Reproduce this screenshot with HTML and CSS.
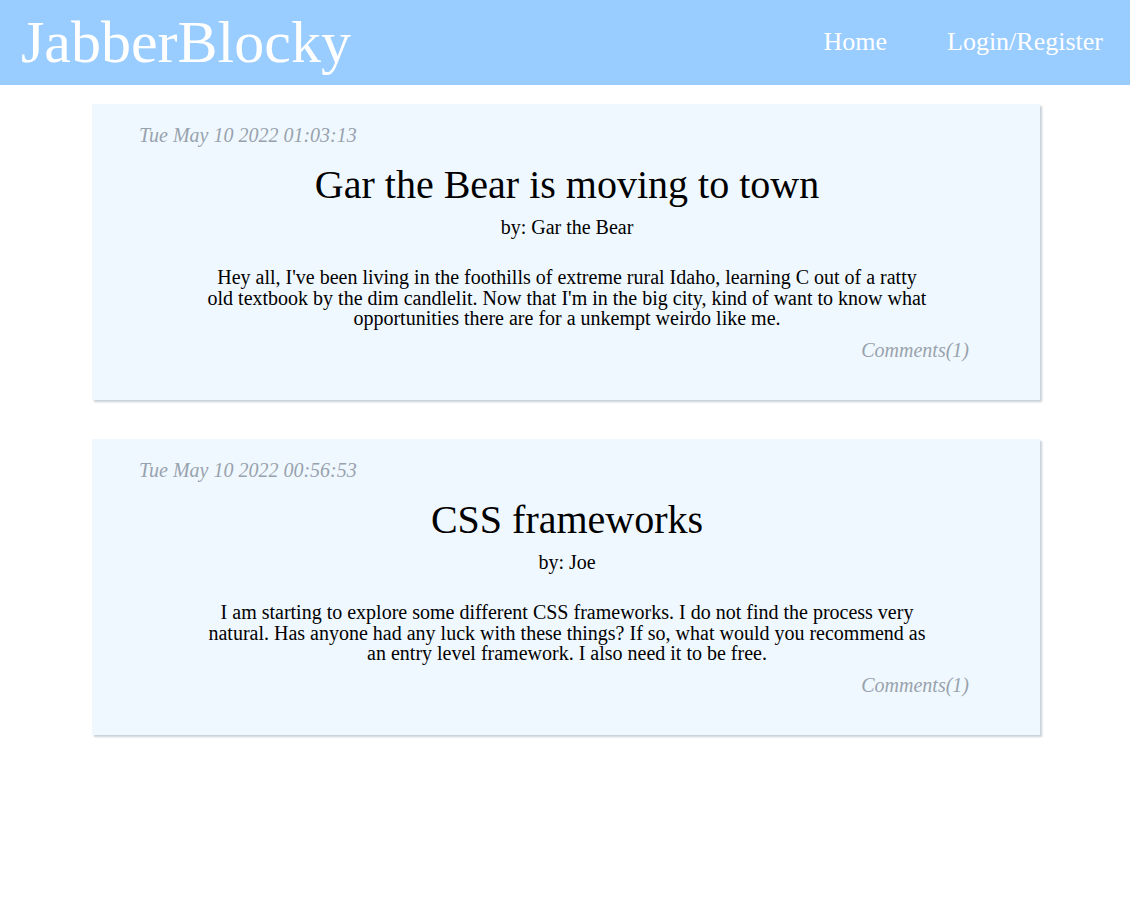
FILE: index.html
```html
<!DOCTYPE html>
<html>
<head>
<meta charset="utf-8">
<title>JabberBlocky</title>
<link rel="stylesheet" href="styles.css">
</head>
<body>
<header class="site-header">
  <div class="brand">JabberBlocky</div>
  <nav class="nav">
    <a class="nav-link" href="#">Home</a>
    <a class="nav-link" href="#">Login/Register</a>
  </nav>
</header>
<main class="feed">
  <article class="post">
    <div class="post-date">Tue May 10 2022 01:03:13</div>
    <h2 class="post-title">Gar the Bear is moving to town</h2>
    <div class="post-author">by: Gar the Bear</div>
    <p class="post-body">Hey all, I've been living in the foothills of extreme rural Idaho, learning C out of a ratty old textbook by the dim candlelit. Now that I'm in the big city, kind of want to know what opportunities there are for a unkempt weirdo like me.</p>
    <div class="post-footer"><a class="comments" href="#">Comments(1)</a></div>
  </article>
  <article class="post">
    <div class="post-date">Tue May 10 2022 00:56:53</div>
    <h2 class="post-title">CSS frameworks</h2>
    <div class="post-author">by: Joe</div>
    <p class="post-body">I am starting to explore some different CSS frameworks. I do not find the process very natural. Has anyone had any luck with these things? If so, what would you recommend as an entry level framework. I also need it to be free.</p>
    <div class="post-footer"><a class="comments" href="#">Comments(1)</a></div>
  </article>
</main>
</body>
</html>
```
FILE: styles.css
```css
html, body {
  margin: 0;
  padding: 0;
}
body {
  font-family: "Liberation Serif", "Times New Roman", serif;
  font-size: 20px;
  color: #000;
  background: #fff;
}
.site-header {
  height: 85px;
  background: #99ccff;
  display: flex;
  align-items: center;
  justify-content: space-between;
  padding: 0 27px 0 21px;
}
.brand {
  color: #fff;
  font-size: 60px;
  line-height: normal;
}
.nav {
  display: flex;
  gap: 60px;
  align-items: center;
}
.nav-link {
  color: #fff;
  text-decoration: none;
  font-size: 26px;
  position: relative;
  top: -1px;
}
.feed {
  display: flex;
  flex-direction: column;
  align-items: center;
  gap: 39px;
  padding: 19px 0 4px 2px;
}
.post {
  width: 948px;
  box-sizing: border-box;
  height: 296px;
  background: #f0f8ff;
  box-shadow: 2px 2px 2px #c8d0d8;
  padding: 20px 71px 0 47px;
  display: flex;
  flex-direction: column;
}
.post-date {
  font-style: italic;
  color: #98a2ad;
  line-height: 23px;
}
.post-title {
  font-size: 40px;
  font-weight: normal;
  text-align: center;
  margin: 14px 0 0 26px;
  line-height: normal;
}
.post-author {
  text-align: center;
  margin: 8px 0 0 26px;
  line-height: 23px;
}
.post-body {
  width: 724px;
  align-self: center;
  margin: 28px 0 0 26px;
  text-align: center;
  line-height: 20.5px;
}
.post-footer {
  margin-top: 10px;
  text-align: right;
  line-height: 23px;
}
.comments {
  font-style: italic;
  color: #98a2ad;
  text-decoration: none;
}
```
